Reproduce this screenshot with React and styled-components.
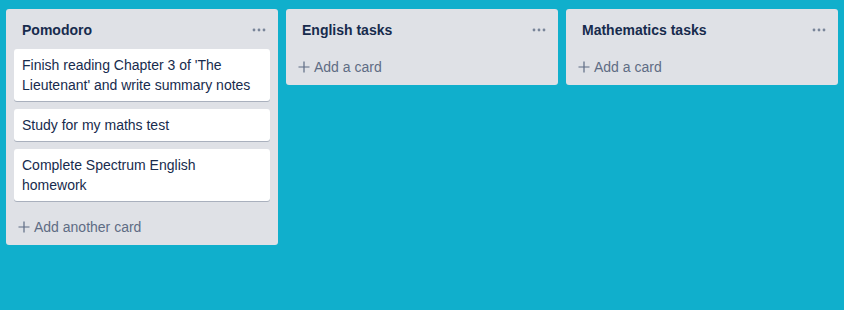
import React from 'react';
import styled, { createGlobalStyle } from 'styled-components';

const GlobalStyle = createGlobalStyle`
  html, body {
    margin: 0;
    padding: 0;
    background-color: #10afcc;
  }
  body {
    font-family: "Liberation Sans", Arial, sans-serif;
  }
`;

const Board = styled.div`
  display: flex;
  align-items: flex-start;
  gap: 8px;
  padding: 9px 6px;
  min-height: 310px;
  box-sizing: border-box;
  background-color: #10afcc;
`;

const List = styled.div`
  width: 272px;
  flex-shrink: 0;
  background-color: #dfe1e6;
  border-radius: 3px;
  display: flex;
  flex-direction: column;
`;

const ListHeader = styled.div`
  display: flex;
  align-items: center;
  justify-content: space-between;
  height: 40px;
  padding: 0 12px 0 16px;
`;

const ListTitle = styled.h2`
  margin: 0;
  font-size: 14px;
  font-weight: 700;
  color: #172b4d;
  line-height: 20px;
  padding-top: 2px;
`;

const MenuButton = styled.span`
  display: flex;
  align-items: center;
  color: #798599;
  padding-top: 1px;
`;

const Cards = styled.div`
  display: flex;
  flex-direction: column;
  gap: 8px;
  padding: 0 8px;
`;

const Card = styled.div`
  background: #fff;
  border-radius: 3px;
  box-shadow: 0 1px 0 rgba(9, 30, 66, 0.25);
  padding: 6px 8px;
  font-size: 14px;
  line-height: 20px;
  color: #172b4d;
`;

const AddCard = styled.div`
  display: flex;
  align-items: center;
  gap: 4px;
  height: 36px;
  margin-top: ${props => (props.hasCards ? '8px' : '0')};
  padding: 0 12px;
  font-size: 14px;
  color: #5e6c84;
`;

const Dots = () => (
  <svg width="14" height="4" viewBox="0 0 14 4">
    <circle cx="2" cy="2" r="1.4" fill="currentColor" />
    <circle cx="7" cy="2" r="1.4" fill="currentColor" />
    <circle cx="12" cy="2" r="1.4" fill="currentColor" />
  </svg>
);

const Plus = () => (
  <svg width="12" height="12" viewBox="0 0 12 12">
    <path d="M6 0.5v11M0.5 6h11" stroke="currentColor" strokeWidth="1.2" />
  </svg>
);

const lists = [
  {
    title: 'Pomodoro',
    cards: [
      "Finish reading Chapter 3 of 'The Lieutenant' and write summary notes",
      'Study for my maths test',
      'Complete Spectrum English homework',
    ],
  },
  { title: 'English tasks', cards: [] },
  { title: 'Mathematics tasks', cards: [] },
];

const App = () => (
  <>
    <GlobalStyle />
    <Board>
      {lists.map(list => (
        <List key={list.title}>
          <ListHeader>
            <ListTitle>{list.title}</ListTitle>
            <MenuButton>
              <Dots />
            </MenuButton>
          </ListHeader>
          {list.cards.length > 0 && (
            <Cards>
              {list.cards.map(card => (
                <Card key={card}>{card}</Card>
              ))}
            </Cards>
          )}
          <AddCard hasCards={list.cards.length > 0}>
            <Plus />
            {list.cards.length > 0 ? 'Add another card' : 'Add a card'}
          </AddCard>
        </List>
      ))}
    </Board>
  </>
);

export default App;
